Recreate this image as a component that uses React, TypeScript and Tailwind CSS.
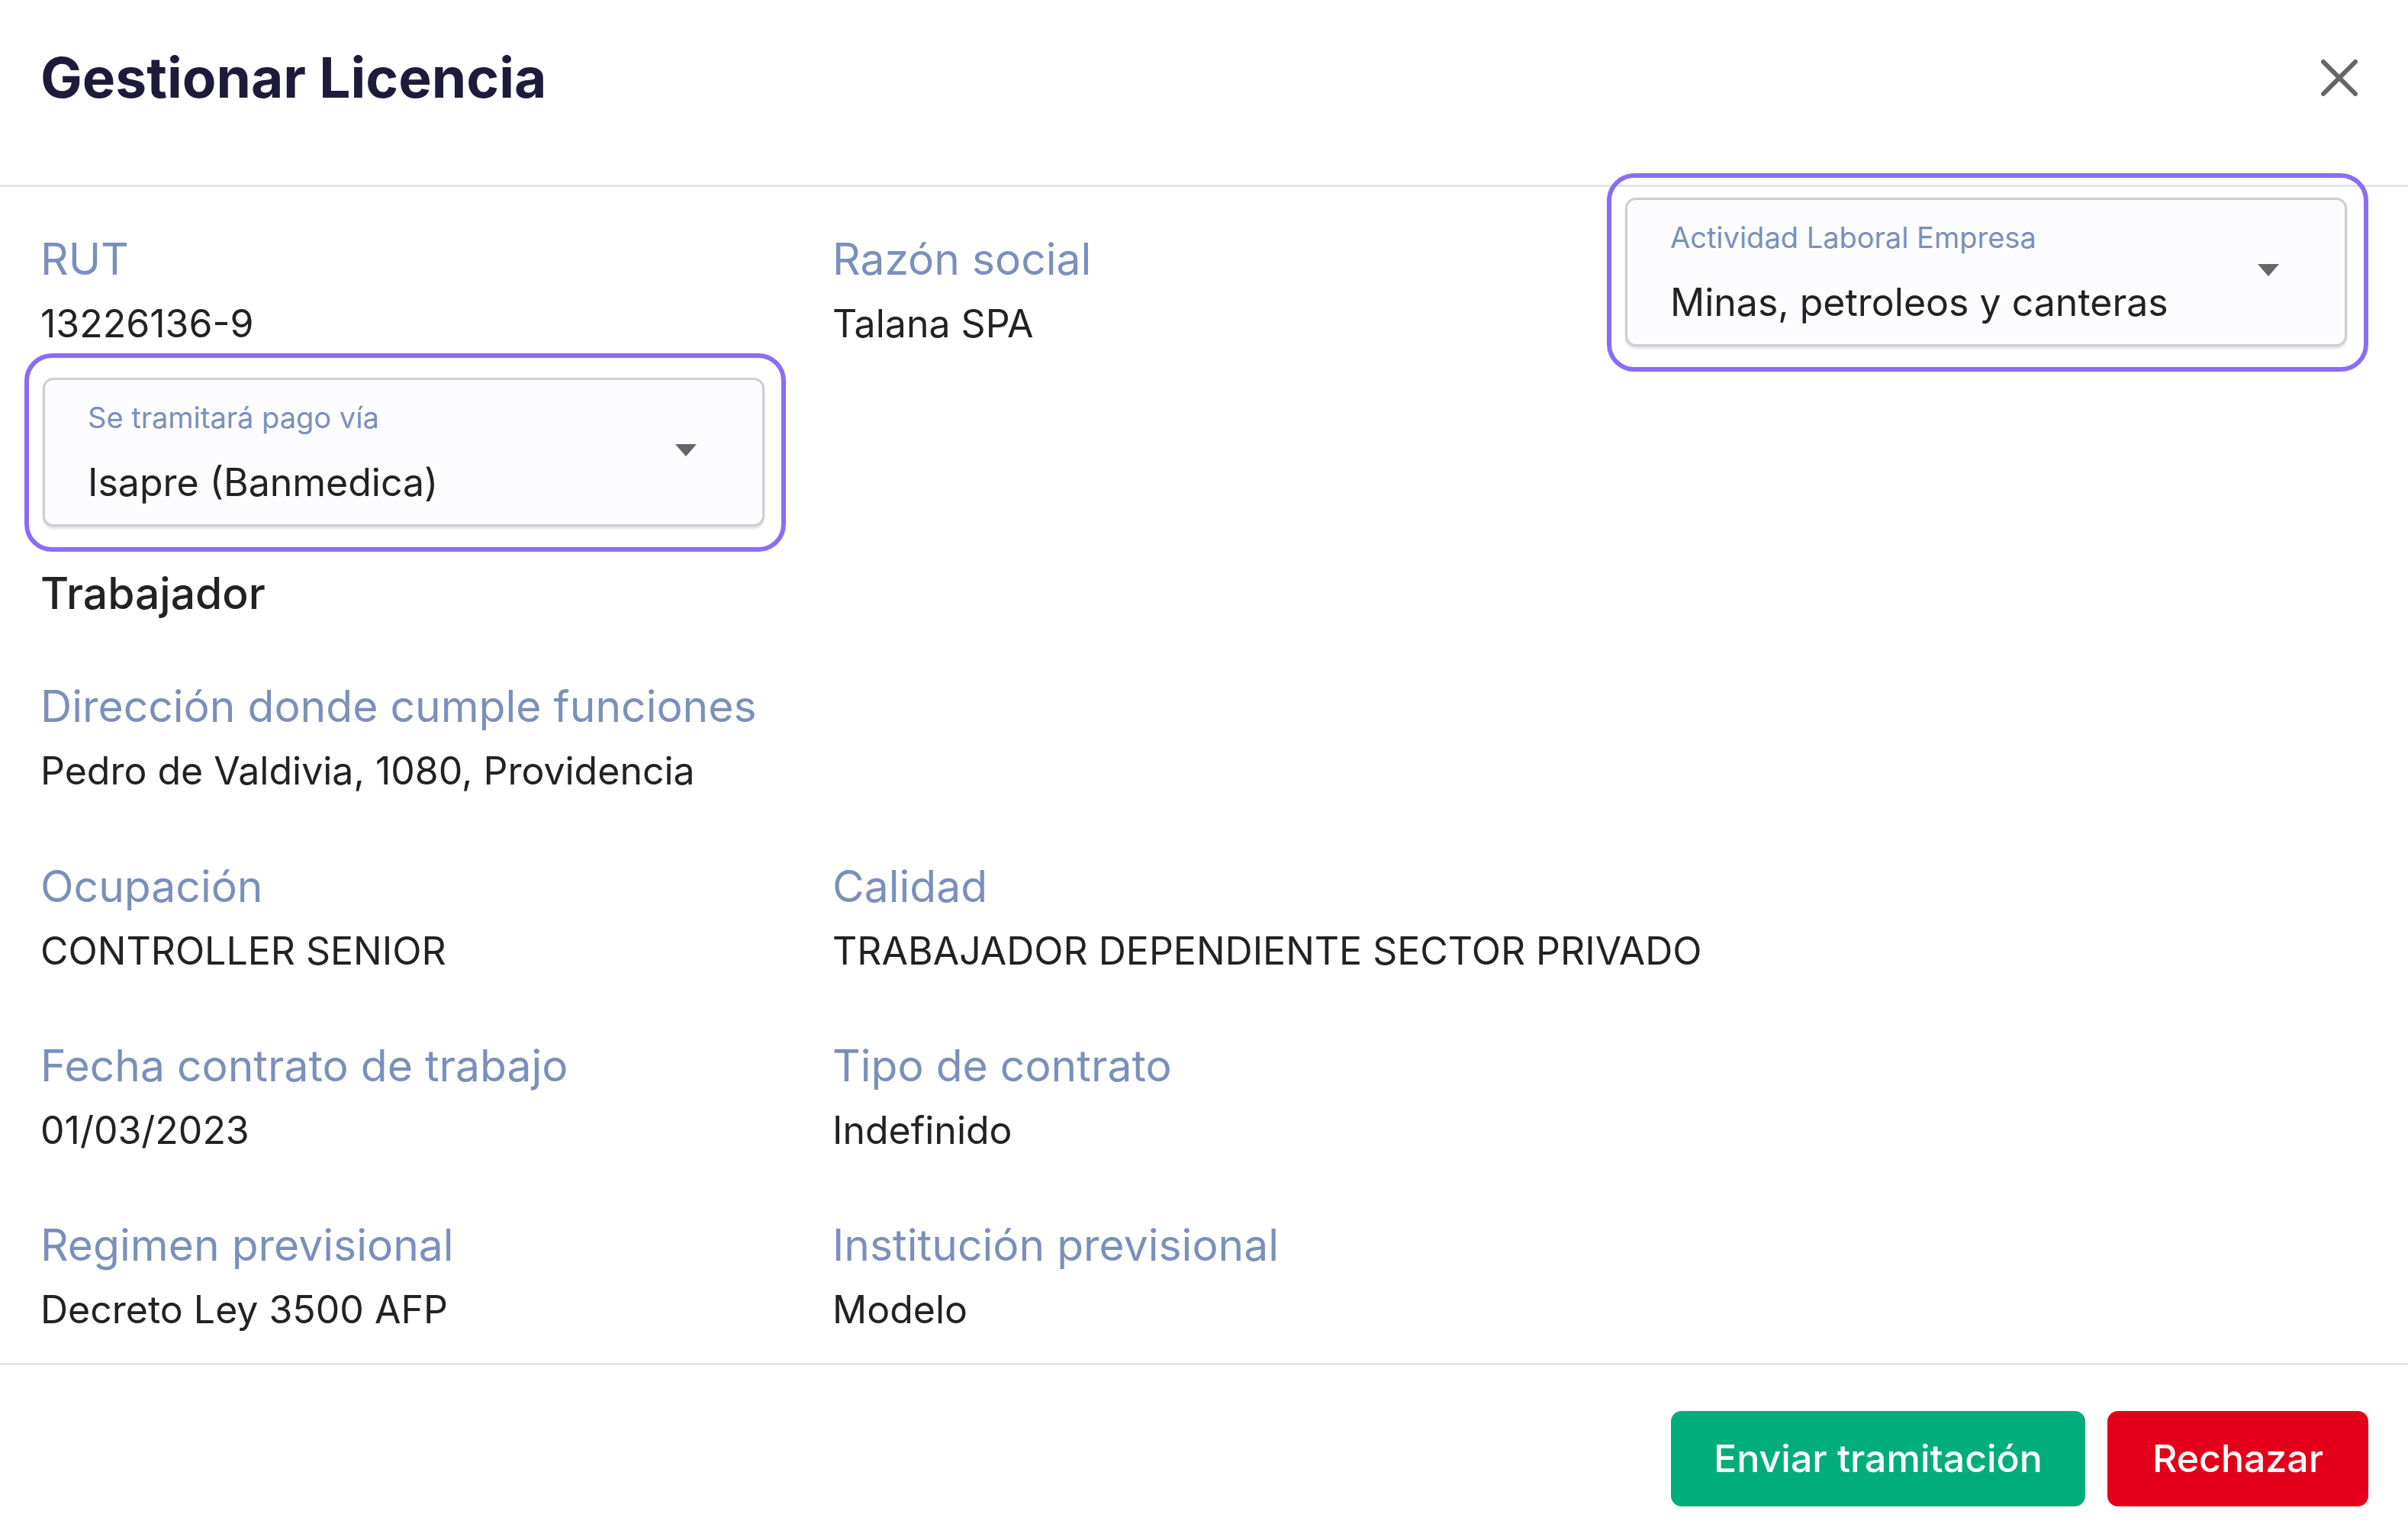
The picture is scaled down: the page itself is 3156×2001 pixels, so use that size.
const labelCls = 'text-[57px] leading-[68px] text-[#7b8fbb]';
const valueCls = 'mt-[18px] text-[50px] leading-[64px] text-[#222222]';

function Field({ label, value }: { label: string; value: string }) {
  return (
    <div>
      <div className={labelCls}>{label}</div>
      <div className={valueCls}>{value}</div>
    </div>
  );
}

function SelectBox({ label, value }: { label: string; value: string }) {
  return (
    <div className="relative w-[946px]">
      {/* highlight ring drawn over the field */}
      <div className="pointer-events-none absolute -top-[32px] -bottom-[33px] -left-[24px] -right-[28px] rounded-[36px] border-[6px] border-[#8b6cf6]" />
      <div className="flex h-[195px] justify-between rounded-[14px] border-[3px] border-[#cdcdd3] bg-[#fcfcfe] pl-[56px] pr-[86px] shadow-[0_3px_3px_rgba(0,0,0,0.12)]">
        <div className="pt-[26px]">
          <div className="text-[38px] leading-[46px] text-[#7b8fbb]">{label}</div>
          <div className="mt-[32px] text-[50px] leading-[60px] text-[#222222]">{value}</div>
        </div>
        <svg width="28" height="16" viewBox="0 0 28 16" className="mt-[84px]">
          <path d="M0 0 L28 0 L14 16 Z" fill="#666666" />
        </svg>
      </div>
    </div>
  );
}

export default function App() {
  return (
    <div className="min-h-screen bg-white font-['Inter',_'Noto_Sans',_sans-serif]">
      <header className="flex h-[245px] items-center justify-between border-b-[3px] border-[#e4e4e4] pl-[53px] pr-[66px]">
        <h1 className="mb-[40px] text-[73px] font-bold leading-none text-[#1e1b3a]">
          Gestionar Licencia
        </h1>
        <button className="mb-[38px]">
          <svg width="48" height="48" viewBox="0 0 48 48">
            <path
              d="M3 3 L45 45 M45 3 L3 45"
              stroke="#666666"
              strokeWidth="6"
              strokeLinecap="round"
            />
          </svg>
        </button>
      </header>

      <main className="pl-[53px] pt-[14px] pb-[38px]">
        <div className="grid grid-cols-[1038px_1039px_946px] items-start">
          <div className="pt-[47px]">
            <Field label="RUT" value="13226136-9" />
          </div>
          <div className="pt-[47px]">
            <Field label="Razón social" value="Talana SPA" />
          </div>
          <SelectBox
            label="Actividad Laboral Empresa"
            value="Minas, petroleos y canteras"
          />
        </div>

        <div className="mt-[39px] ml-[3px]">
          <SelectBox label="Se tramitará pago vía" value="Isapre (Banmedica)" />
        </div>

        <div className="mt-[54px] text-[57px] font-medium leading-[68px] text-[#222222]">
          Trabajador
        </div>

        <div className="mt-[80px]">
          <Field
            label="Dirección donde cumple funciones"
            value="Pedro de Valdivia, 1080, Providencia"
          />
        </div>

        <div className="mt-[86px] grid grid-cols-[1038px_1fr] gap-y-[85px]">
          <Field label="Ocupación" value="CONTROLLER SENIOR" />
          <Field label="Calidad" value="TRABAJADOR DEPENDIENTE SECTOR PRIVADO" />
          <Field label="Fecha contrato de trabajo" value="01/03/2023" />
          <Field label="Tipo de contrato" value="Indefinido" />
          <Field label="Regimen previsional" value="Decreto Ley 3500 AFP" />
          <Field label="Institución previsional" value="Modelo" />
        </div>
      </main>

      <footer className="flex justify-end gap-[29px] border-t-[3px] border-[#e4e4e4] pt-[60px] pb-[26px] pr-[52px]">
        <button className="h-[125px] w-[543px] rounded-[14px] bg-[#00ad7b] text-[50px] font-medium text-white">
          Enviar tramitación
        </button>
        <button className="h-[125px] w-[342px] rounded-[14px] bg-[#e4001a] text-[50px] font-medium text-white">
          Rechazar
        </button>
      </footer>
    </div>
  );
}
